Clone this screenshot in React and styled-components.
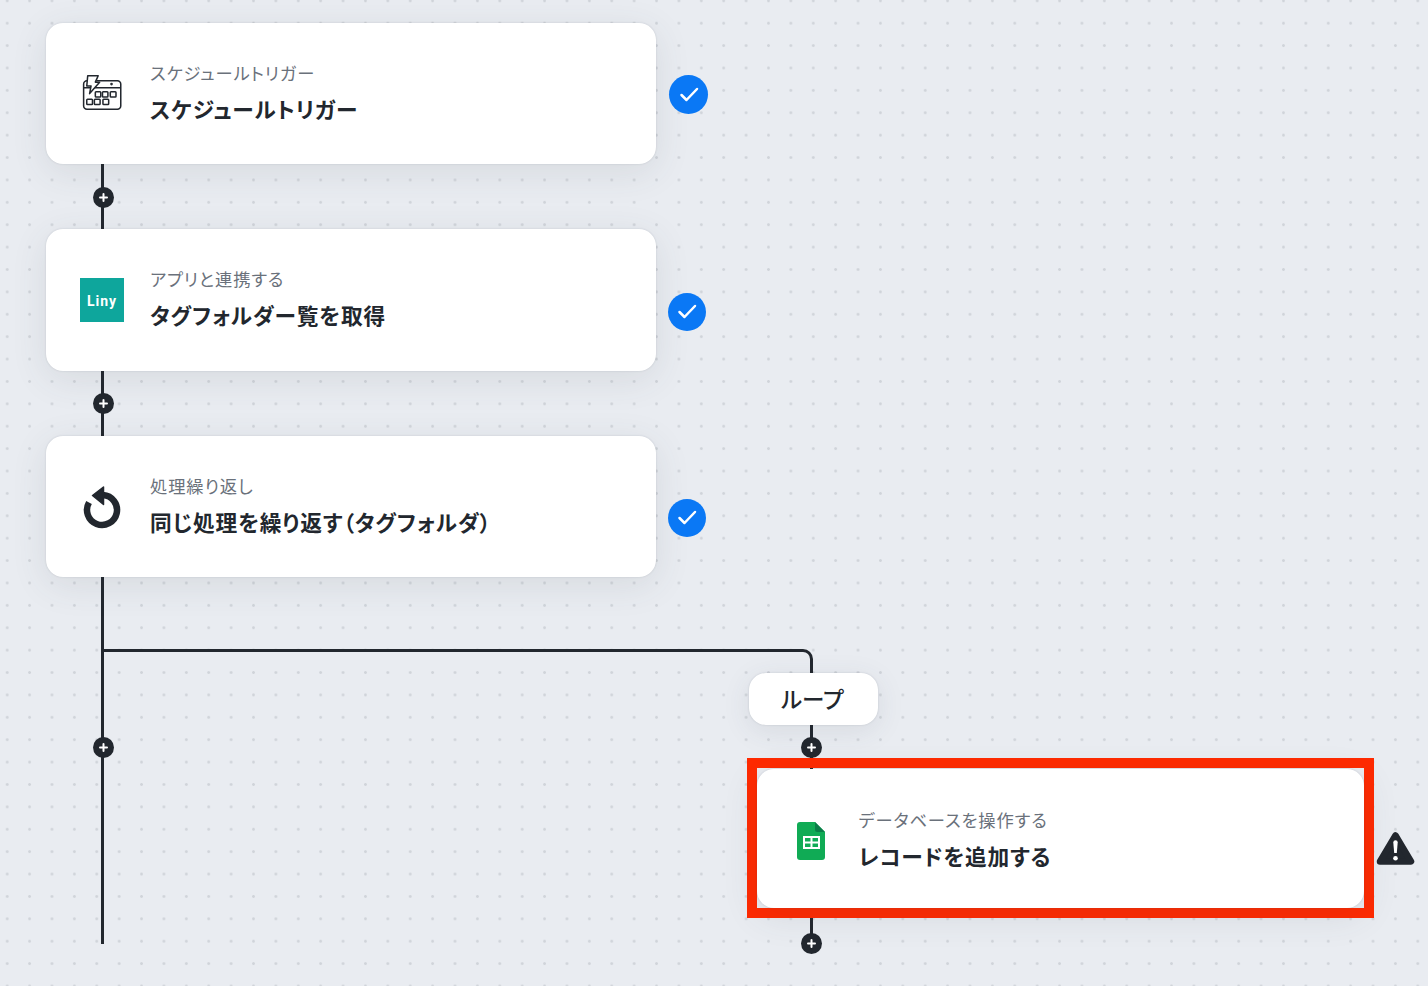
import React from "react";
import styled, { createGlobalStyle } from "styled-components";

const Global = createGlobalStyle`
  html, body { margin: 0; padding: 0; background: #e9ecf1; }
  * { box-sizing: border-box; }
`;

const INK = "#22272e";

const Canvas = styled.div`
  position: relative;
  width: 1428px;
  height: 986px;
  overflow: hidden;
  font-family: "Noto Sans CJK JP", "Noto Sans", sans-serif;
  font-feature-settings: "palt";
  background-color: #e9ecf1;
  background-image: radial-gradient(circle at center, #d0d4da 0, #d0d4da 1px, transparent 1.7px);
  background-size: 22.4px 22.4px;
  background-position: -4px -10.4px;
`;

const Line = styled.div`
  position: absolute;
  left: ${(p) => p.$x}px;
  top: ${(p) => p.$y}px;
  width: 3px;
  height: ${(p) => p.$h}px;
  background: ${INK};
`;

const Elbow = styled.div`
  position: absolute;
  left: 103px;
  top: 649px;
  width: 710px;
  height: 24px;
  border-top: 3px solid ${INK};
  border-right: 3px solid ${INK};
  border-top-right-radius: 10px;
`;

const Card = styled.div`
  position: absolute;
  left: ${(p) => p.$x}px;
  top: ${(p) => p.$y}px;
  width: ${(p) => p.$w}px;
  height: ${(p) => p.$h}px;
  display: flex;
  align-items: center;
  background: #fff;
  border-radius: 17px;
  box-shadow: 0 0 2px rgba(60, 70, 85, 0.2), 0 8px 36px rgba(60, 70, 85, 0.11);
`;

const IconSlot = styled.div`
  flex: 0 0 ${(p) => p.$w}px;
  display: flex;
  justify-content: center;
  align-items: center;
  height: 60px;
  margin-left: ${(p) => p.$ml}px;
  margin-top: ${(p) => p.$mt || 0}px;
`;

const Texts = styled.div`
  display: flex;
  flex-direction: column;
  gap: 9px;
  margin-left: ${(p) => p.$ml}px;
  margin-top: ${(p) => p.$mt}px;
`;

const Sub = styled.div`
  font-size: 17.3px;
  line-height: 24px;
  letter-spacing: 0.9px;
  color: #6a717b;
  white-space: nowrap;
`;

const Title = styled.div`
  font-size: 21.7px;
  line-height: 30px;
  letter-spacing: 0.85px;
  font-weight: 700;
  color: ${INK};
  white-space: nowrap;
`;

const Badge = styled.div`
  position: absolute;
  left: ${(p) => p.$x}px;
  top: ${(p) => p.$y}px;
  width: ${(p) => p.$s}px;
  height: ${(p) => p.$s}px;
  border-radius: 50%;
  background: #0a78f5;
  display: flex;
  align-items: center;
  justify-content: center;
`;

const PlusDot = styled.div`
  position: absolute;
  left: ${(p) => p.$x}px;
  top: ${(p) => p.$y}px;
  width: 21px;
  height: 21px;
  border-radius: 50%;
  background: ${INK};
  display: flex;
  align-items: center;
  justify-content: center;
`;

const LoopPill = styled.div`
  position: absolute;
  left: 749px;
  top: 673px;
  width: 129px;
  height: 52px;
  padding: 0 2px 3px 0;
  background: #fff;
  border-radius: 17px;
  display: flex;
  align-items: center;
  justify-content: center;
  font-size: 22.5px;
  font-weight: 500;
  color: ${INK};
  box-shadow: 0 0 2px rgba(60, 70, 85, 0.2), 0 6px 28px rgba(60, 70, 85, 0.1);
`;

const Highlight = styled.div`
  position: absolute;
  left: 747px;
  top: 758px;
  width: 627px;
  height: 160px;
  border: 10px solid #ff2a00;
`;

const Warn = styled.div`
  position: absolute;
  left: 1376px;
  top: 830px;
  width: 39px;
  height: 36px;
`;

const Plus = () => (
  <svg width="11" height="11" viewBox="0 0 11 11">
    <path d="M5.5 2v7M2 5.5h7" stroke="#fff" strokeWidth="2" strokeLinecap="round" />
  </svg>
);

const Check = () => (
  <svg width="20" height="20" viewBox="0 0 20 20" fill="none">
    <path d="M2.5 10l5 5L18 4" stroke="#fff" strokeWidth="2.5" strokeLinecap="round" strokeLinejoin="round" />
  </svg>
);

const ScheduleIcon = () => (
  <svg width="40" height="36.200" viewBox="0 0 42 38" fill="none" stroke={INK} strokeWidth="1.600" strokeLinejoin="round">
    <path d="M8 6H5.200A3.500 3.500 0 0 0 1.700 9.500V32.500A3.500 3.500 0 0 0 5.200 36H37.200A3.500 3.500 0 0 0 40.700 32.500V9.500A3.500 3.500 0 0 0 37.200 6H15" />
    <path d="M1.700 13.500H9M13 13.500H40.700" />
    <path d="M6 0.800H17L14 7.500H18.500L8 19.500L9.500 11.500H5Z" fill="#fff" />
    <circle cx="31" cy="9.500" r="0.600" fill={INK} />
    <rect x="14" y="17.500" width="5.700" height="5.500" rx="0.800" />
    <rect x="21.500" y="17.500" width="5.700" height="5.500" rx="0.800" />
    <rect x="29.700" y="17.500" width="6" height="5.500" rx="0.800" />
    <rect x="5" y="25.500" width="6" height="5.500" rx="0.800" />
    <rect x="13" y="25.500" width="6" height="5.500" rx="0.800" />
    <rect x="22" y="25.500" width="6" height="5.500" rx="0.800" />
  </svg>
);

const LinyLogo = styled.div`
  width: 44px;
  height: 44px;
  padding-top: 1px;
  background: #0ea69c;
  color: #fff;
  display: flex;
  align-items: center;
  justify-content: center;
  font-family: "Roboto", sans-serif;
  font-feature-settings: normal;
  font-size: 14px;
  font-weight: 700;
  letter-spacing: 1px;
`;

const ReplayIcon = () => (
  <svg width="38" height="44" viewBox="0 0 38 44" fill="none">
    <path d="M20 10A15 15 0 1 1 6 17.500" stroke={INK} strokeWidth="6.500" />
    <path d="M9.500 10.500L20.500 2V19.500Z" fill={INK} stroke={INK} strokeWidth="1.500" strokeLinejoin="round" />
  </svg>
);

const SheetsIcon = () => (
  <svg width="28" height="38" viewBox="0 0 28 38">
    <path d="M3 0H18L28 10V35A3 3 0 0 1 25 38H3A3 3 0 0 1 0 35V3A3 3 0 0 1 3 0Z" fill="#10ab55" />
    <path d="M18 0L28 10H20.500A2.500 2.500 0 0 1 18 7.500Z" fill="#0a7d48" />
    <path fillRule="evenodd" d="M6 14H23V27H6ZM8 16V19.500H13.500V16ZM15.500 16V19.500H21V16ZM8 21.500V25H13.500V21.500ZM15.500 21.500V25H21V21.500Z" fill="#fff" />
  </svg>
);

const WarnIcon = () => (
  <svg width="39" height="36" viewBox="0 0 39 36">
    <path d="M19.500 5.500L35 31.500H4Z" fill={INK} stroke={INK} strokeWidth="6.500" strokeLinejoin="round" />
    <path d="M17.300 12.500A2.200 2.200 0 0 1 21.700 12.500L20.800 23H18.200Z" fill="#fff" />
    <circle cx="19.500" cy="28.300" r="2.300" fill="#fff" />
  </svg>
);

const steps = [
  { y: 23, h: 141, sub: "スケジュールトリガー", title: "スケジュールトリガー", icon: <ScheduleIcon /> },
  { y: 229, h: 142, sub: "アプリと連携する", title: "タグフォルダー覧を取得", icon: <LinyLogo>Liny</LinyLogo> },
  { y: 436, h: 141, sub: "処理繰り返し", title: "同じ処理を繰り返す（タグフォルダ）", icon: <ReplayIcon /> },
];

const lines = [
  { x: 101, y: 160, h: 70 },
  { x: 101, y: 368, h: 70 },
  { x: 101, y: 575, h: 369 },
  { x: 810, y: 720, h: 50 },
  { x: 810, y: 915, h: 20 },
];

const plusDots = [
  [92.5, 186.5],
  [92.5, 392.5],
  [92.5, 736.5],
  [801, 736.5],
  [801, 933],
];

export default function App() {
  return (
    <>
      <Global />
      <Canvas>
        {lines.map((l, i) => (
          <Line key={i} $x={l.x} $y={l.y} $h={l.h} />
        ))}
        <Elbow />
        {steps.map((s) => (
          <Card key={s.y} $x={46} $y={s.y} $w={610} $h={s.h}>
            <IconSlot $w={46} $ml={33}>{s.icon}</IconSlot>
            <Texts $ml={25} $mt={-3}>
              <Sub>{s.sub}</Sub>
              <Title>{s.title}</Title>
            </Texts>
          </Card>
        ))}
        <Badge $x={669} $y={75} $s={39}><Check /></Badge>
        <Badge $x={668} $y={293} $s={38}><Check /></Badge>
        <Badge $x={668} $y={499} $s={38}><Check /></Badge>
        <LoopPill>ループ</LoopPill>
        <Highlight />
        <Card $x={757} $y={769} $w={607} $h={139}>
          <IconSlot $w={28} $ml={40} $mt={4}><SheetsIcon /></IconSlot>
          <Texts $ml={33.5} $mt={1}>
            <Sub>データベースを操作する</Sub>
            <Title>レコードを追加する</Title>
          </Texts>
        </Card>
        <Warn><WarnIcon /></Warn>
        {plusDots.map(([x, y], i) => (
          <PlusDot key={i} $x={x} $y={y}><Plus /></PlusDot>
        ))}
      </Canvas>
    </>
  );
}
